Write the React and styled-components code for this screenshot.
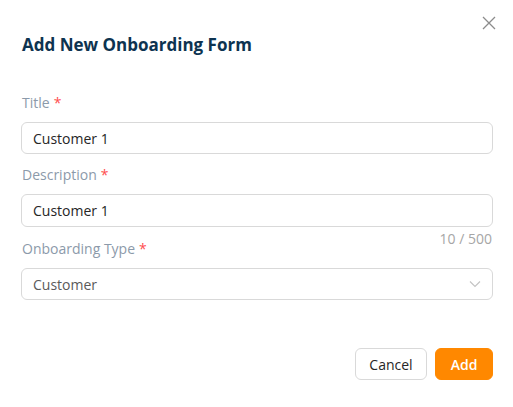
import React from "react";
import styled, { createGlobalStyle } from "styled-components";

const GlobalStyle = createGlobalStyle`
  html, body {
    margin: 0;
    padding: 0;
    background: #ffffff;
  }
  body {
    font-family: "Open Sans", "Noto Sans", sans-serif;
  }
`;

const Modal = styled.div`
  position: relative;
  width: 513px;
  height: 407px;
  box-sizing: border-box;
  padding: 33px 20px 0 21px;
  background: #ffffff;
  display: flex;
  flex-direction: column;
`;

const Title = styled.h2`
  margin: 0 0 0 1px;
  font-size: 17px;
  line-height: 24px;
  font-weight: 700;
  color: #0d3350;
`;

const CloseButton = styled.button`
  position: absolute;
  top: 15px;
  right: 16px;
  width: 16px;
  height: 16px;
  padding: 0;
  border: none;
  background: none;
  display: flex;
  align-items: center;
  justify-content: center;
  cursor: pointer;
`;

const Form = styled.div`
  margin-top: 35px;
  display: flex;
  flex-direction: column;
`;

const Field = styled.div`
  display: flex;
  flex-direction: column;
  margin-bottom: ${(p) => p.$gap || 10}px;
  position: relative;
`;

const Label = styled.label`
  font-size: 14px;
  line-height: 22px;
  color: #8c9aaa;
  margin: 0 0 8px 1px;

  span {
    color: #ff4d4f;
    margin-left: 4px;
  }
`;

const Box = styled.div`
  height: ${(p) => p.$h || 32}px;
  box-sizing: border-box;
  border: 1px solid #d9d9d9;
  border-radius: 6px;
  padding: 0 11px;
  display: flex;
  align-items: center;
  justify-content: space-between;
  font-size: 14px;
  color: ${(p) => p.$muted ? "#5a5a5a" : "#262626"};
`;

const Count = styled.div`
  position: absolute;
  right: 1px;
  bottom: -23px;
  font-size: 14px;
  line-height: 22px;
  color: #a6a6a6;
`;

const Footer = styled.div`
  margin-top: auto;
  margin-bottom: 27px;
  display: flex;
  justify-content: flex-end;
  gap: 8px;
`;

const Button = styled.button`
  width: ${(p) => p.$w}px;
  height: 32px;
  padding: 0;
  border-radius: 6px;
  font-family: inherit;
  font-size: 14px;
  cursor: pointer;
  border: 1px solid ${(p) => (p.$primary ? "#ff8800" : "#d9d9d9")};
  background: ${(p) => (p.$primary ? "#ff8800" : "#ffffff")};
  color: ${(p) => (p.$primary ? "#ffffff" : "#262626")};
  font-weight: ${(p) => (p.$primary ? 600 : 400)};
`;

export default function App() {
  return (
    <>
      <GlobalStyle />
      <Modal>
        <CloseButton aria-label="Close">
          <svg width="14" height="14" viewBox="0 0 14 14">
            <path d="M1 1 L13 13 M13 1 L1 13" stroke="#8c8c8c" strokeWidth="1.3" />
          </svg>
        </CloseButton>
        <Title>Add New Onboarding Form</Title>
        <Form>
          <Field>
            <Label>
              Title<span>*</span>
            </Label>
            <Box>Customer 1</Box>
          </Field>
          <Field $gap={11}>
            <Label>
              Description<span>*</span>
            </Label>
            <Box $h={33}>Customer 1</Box>
            <Count>10 / 500</Count>
          </Field>
          <Field>
            <Label>
              Onboarding Type<span>*</span>
            </Label>
            <Box $muted>
              Customer
              <svg width="12" height="8" viewBox="0 0 12 8">
                <path d="M1 1.5 L6 6.5 L11 1.5" fill="none" stroke="#c4c4c4" strokeWidth="1.2" />
              </svg>
            </Box>
          </Field>
        </Form>
        <Footer>
          <Button $w={72}>Cancel</Button>
          <Button $w={58} $primary>Add</Button>
        </Footer>
      </Modal>
    </>
  );
}
